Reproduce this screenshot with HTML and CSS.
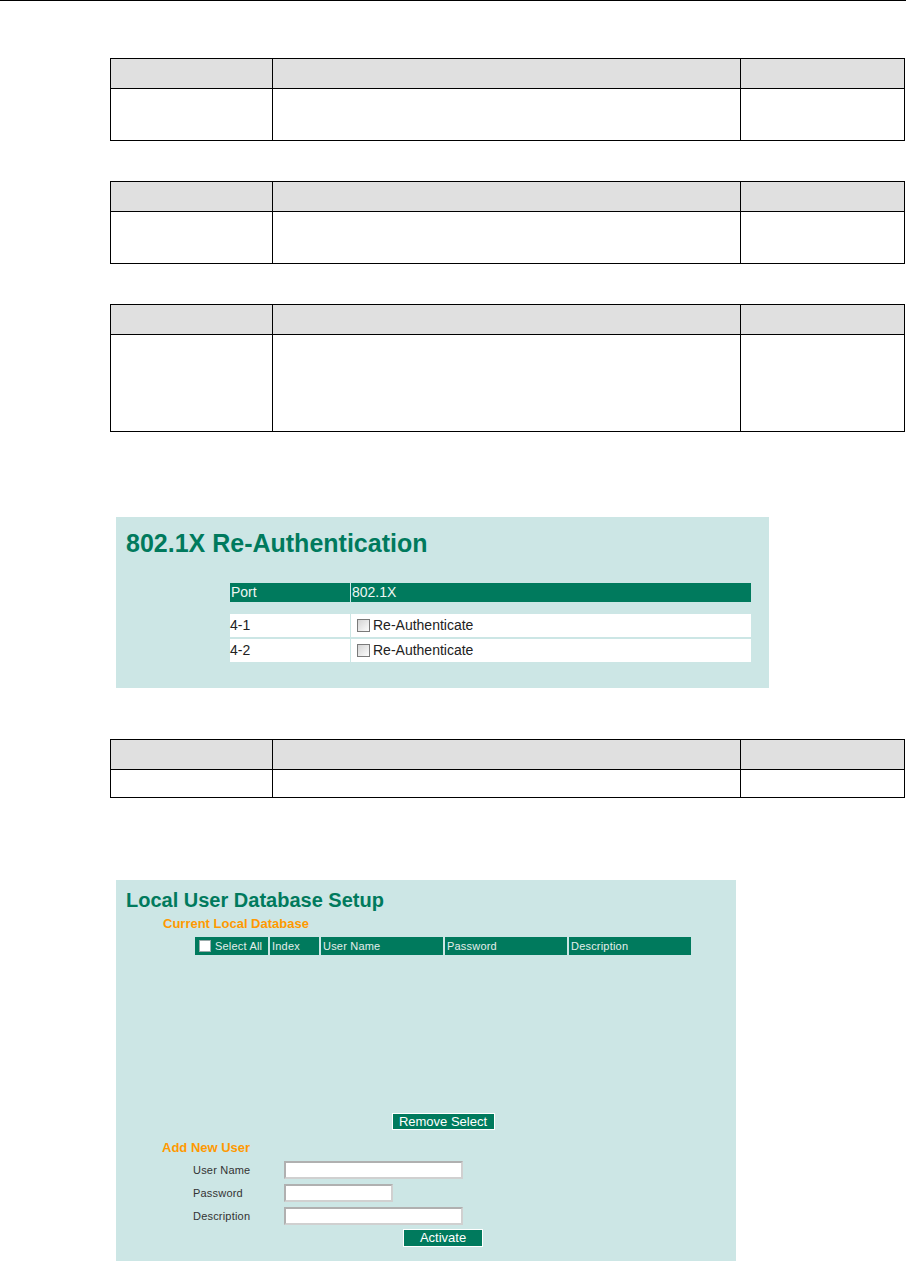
FILE: index.html
```html
<!DOCTYPE html>
<html lang="en">
<head>
  <meta charset="UTF-8">
  <meta name="viewport" content="width=device-width, initial-scale=1.0">
  <title>802.1X and Local User Database</title>
  <link rel="stylesheet" href="styles.css">
</head>
<body>
  <div class="page-rule"></div>

  <main class="doc">
    <table class="spec">
      <thead>
        <tr><th class="col-setting"></th><th class="col-desc"></th><th class="col-default"></th></tr>
      </thead>
      <tbody>
        <tr class="body-two"><td></td><td></td><td></td></tr>
      </tbody>
    </table>

    <table class="spec">
      <thead>
        <tr><th class="col-setting"></th><th class="col-desc"></th><th class="col-default"></th></tr>
      </thead>
      <tbody>
        <tr class="body-two"><td></td><td></td><td></td></tr>
      </tbody>
    </table>

    <table class="spec before-shot">
      <thead>
        <tr><th class="col-setting"></th><th class="col-desc"></th><th class="col-default"></th></tr>
      </thead>
      <tbody>
        <tr class="body-four"><td></td><td></td><td></td></tr>
      </tbody>
    </table>

    <!-- 802.1X re-authentication screen -->
    <section class="shot shot-reauth">
      <h2 class="shot-title">802.1X Re-Authentication</h2>
      <div class="port-table">
        <div class="port-head">Port</div>
        <div class="port-head">802.1X</div>
        <div class="port-cell port-first">4-1</div>
        <div class="port-cell port-first"><label><input type="checkbox" class="chk">Re-Authenticate</label></div>
        <div class="port-cell">4-2</div>
        <div class="port-cell"><label><input type="checkbox" class="chk">Re-Authenticate</label></div>
      </div>
    </section>

    <table class="spec before-shot-users">
      <thead>
        <tr><th class="col-setting"></th><th class="col-desc"></th><th class="col-default"></th></tr>
      </thead>
      <tbody>
        <tr class="body-one"><td></td><td></td><td></td></tr>
      </tbody>
    </table>

    <!-- local user database screen -->
    <section class="shot shot-users">
      <h2 class="shot-title small">Local User Database Setup</h2>
      <h3 class="sub-title">Current Local Database</h3>
      <div class="user-area">
        <div class="user-head">
          <div class="user-col"><input type="checkbox" class="chk-small">Select All</div>
          <div class="user-col">Index</div>
          <div class="user-col">User Name</div>
          <div class="user-col">Password</div>
          <div class="user-col">Description</div>
        </div>
        <div class="user-list"></div>
        <div class="btn-row">
          <button type="button" class="btn btn-remove">Remove Select</button>
        </div>
      </div>

      <h3 class="sub-title add-title">Add New User</h3>
      <form class="user-form">
        <label for="uname">User Name</label>
        <input type="text" id="uname" class="field">
        <label for="upass">Password</label>
        <input type="password" id="upass" class="field field-short">
        <label for="udesc">Description</label>
        <input type="text" id="udesc" class="field">
      </form>
      <div class="user-area">
        <div class="btn-row activate-row">
          <button type="button" class="btn btn-activate">Activate</button>
        </div>
      </div>
    </section>
  </main>
</body>
</html>
```

FILE: styles.css
```css
body {
  margin: 0;
  font-family: "Liberation Sans", Arial, sans-serif;
  background: #fff;
  color: #222;
}
.page-rule {
  width: 906px;
  border-top: 1px solid #000;
}
.doc {
  padding: 57px 0 0 110px;
}

/* parameter tables */
.spec {
  width: 795px;
  border-collapse: separate;
  border-spacing: 0;
  table-layout: fixed;
  border-top: 1px solid #000;
  border-left: 1px solid #000;
  margin-bottom: 40px;
}
.spec th, .spec td {
  box-sizing: border-box;
  padding: 0;
  border-right: 1px solid #000;
  border-bottom: 1px solid #000;
}
.spec th {
  height: 30px;
  background: #e0e0e0;
}
.col-setting { width: 162px; }
.col-desc { width: 468px; }
.col-default { width: 164px; }
.body-one td { height: 28px; }
.body-two td { height: 52px; }
.body-four td { height: 97px; }
.spec.before-shot {
  margin-bottom: 85px;
}
.spec.before-shot-users {
  margin-bottom: 82px;
}

/* screen captures */
.shot {
  box-sizing: border-box;
  margin-left: 6px;
  background: #cce6e5;
  padding-left: 10px;
}
.shot-title {
  margin: 0;
  color: #007a5d;
  font-size: 25px;
  line-height: 30px;
  font-weight: bold;
}
.shot-title.small {
  font-size: 20px;
  line-height: 24px;
}

.shot-reauth {
  width: 653px;
  height: 171px;
  padding-top: 11px;
  margin-bottom: 51px;
}
.port-table {
  display: grid;
  grid-template-columns: 120px 400px;
  column-gap: 1px;
  margin: 25px 0 0 104px;
  width: 521px;
  font-size: 14px;
}
.port-head {
  background: #007a5d;
  color: #eef6f3;
  height: 19px;
  line-height: 19px;
  padding-left: 1px;
  margin-bottom: 12px;
}
.port-cell {
  background: #fff;
  height: 23px;
  line-height: 23px;
  margin-top: 2px;
  color: #222;
}
.port-cell.port-first {
  margin-top: 0;
}
.port-cell label {
  display: flex;
  align-items: center;
  height: 23px;
}
.chk {
  appearance: none;
  box-sizing: border-box;
  width: 13px;
  height: 13px;
  margin: 0 3px 0 6px;
  border: 1px solid #7a7a7a;
  background: linear-gradient(135deg, #d4d4d4, #fcfcfc);
}

.shot-users {
  width: 620px;
  padding-top: 8px;
  padding-bottom: 14px;
}
.sub-title {
  margin: 4px 0 0 37px;
  color: #ff9900;
  font-size: 13px;
  line-height: 16px;
  font-weight: bold;
}
.sub-title.add-title {
  margin-top: 10px;
  margin-left: 36px;
}
.user-area {
  width: 496px;
  margin-left: 69px;
}
.user-head {
  display: grid;
  grid-template-columns: 73px 49px 122px 122px 122px;
  column-gap: 2px;
  margin-top: 5px;
}
.user-col {
  display: flex;
  align-items: center;
  height: 18px;
  padding-left: 2px;
  background: #007a5d;
  color: #e4eeeb;
  font-size: 11px;
  letter-spacing: 0.2px;
}
.chk-small {
  appearance: none;
  box-sizing: border-box;
  width: 12px;
  height: 12px;
  margin: 0 4px 0 2px;
  border: 1px solid #9aa;
  background: #fff;
}
.user-list {
  height: 158px;
}
.btn-row {
  display: flex;
  justify-content: center;
}
.btn {
  box-sizing: border-box;
  padding: 0;
  border: 1px solid #fff;
  background: #007a5d;
  color: #fff;
  font-family: "Liberation Sans", Arial, sans-serif;
  font-size: 13px;
  cursor: pointer;
}
.btn-remove {
  width: 103px;
  height: 17px;
  line-height: 15px;
}
.btn-activate {
  width: 80px;
  height: 18px;
  line-height: 16px;
}
.activate-row {
  margin-top: 4px;
}

.user-form {
  display: grid;
  grid-template-columns: 91px auto;
  justify-content: start;
  justify-items: start;
  align-items: center;
  row-gap: 5px;
  margin: 5px 0 0 67px;
  font-size: 11px;
  color: #333;
  letter-spacing: 0.2px;
}
.field {
  box-sizing: border-box;
  width: 179px;
  height: 18px;
  margin: 0;
  padding: 0 2px;
  border: 2px solid;
  border-color: #b0b0b0 #d0d0d0 #d0d0d0 #b0b0b0;
  background: #fff;
}
.field-short {
  width: 109px;
}
```
